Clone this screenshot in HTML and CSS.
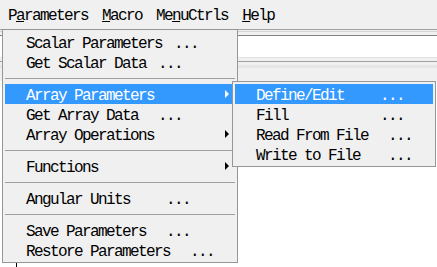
FILE: index.html
```html
<!DOCTYPE html>
<html lang="en">
<head>
  <meta charset="UTF-8">
  <title>Parameters menu</title>
  <link rel="stylesheet" href="styles.css">
</head>
<body>
  <!-- Menu bar -->
  <div class="menubar">
    <span class="mb-item">P<u>a</u>rameters</span>
    <span class="mb-item"><u>M</u>acro</span>
    <span class="mb-item">Me<u>n</u>uCtrls</span>
    <span class="mb-item"><u>H</u>elp</span>
  </div>

  <!-- Window content behind the menus -->
  <div class="toolbar">
    <div class="tb-line"></div>
    <div class="field"></div>
    <div class="tb-rule"></div>
  </div>
  <div class="workspace">
    <div class="tick"></div>
  </div>

  <!-- Parameters drop-down -->
  <div class="menu main">
    <div class="item"><span class="label">Scalar Parameters <span class="dots">...</span></span></div>
    <div class="item"><span class="label">Get Scalar Data <span class="dots">...</span></span></div>
    <div class="sep"></div>
    <div class="item active"><span class="label">Array Parameters</span><span class="arrow"></span></div>
    <div class="item"><span class="label">Get Array Data  <span class="dots">...</span></span></div>
    <div class="item"><span class="label">Array Operations</span><span class="arrow"></span></div>
    <div class="sep"></div>
    <div class="item"><span class="label">Functions</span><span class="arrow"></span></div>
    <div class="sep"></div>
    <div class="item"><span class="label">Angular Units    <span class="dots">...</span></span></div>
    <div class="sep"></div>
    <div class="item"><span class="label">Save Parameters  <span class="dots">...</span></span></div>
    <div class="item"><span class="label">Restore Parameters  <span class="dots">...</span></span></div>
  </div>

  <!-- Array Parameters submenu -->
  <div class="menu submenu">
    <div class="item active"><span class="label">Define/Edit    <span class="dots">...</span></span></div>
    <div class="item"><span class="label">Fill           <span class="dots">...</span></span></div>
    <div class="item"><span class="label">Read From File  <span class="dots">...</span></span></div>
    <div class="item"><span class="label">Write to File   <span class="dots">...</span></span></div>
  </div>
</body>
</html>
```

FILE: styles.css
```css
/* Classic Windows style menus */
html, body {
  margin: 0;
  width: 437px;
  height: 267px;
  overflow: hidden;
  background: #fff;
}

body {
  font-family: "Liberation Mono", "DejaVu Sans Mono", monospace;
  font-size: 16px;
  letter-spacing: -1.6px; /* 8px per character */
  color: #000;
}

u {
  text-decoration: underline;
  text-underline-offset: 1px;
}

.menubar {
  height: 29px;
  display: flex;
  padding-left: 1px;
  background: #f0f0f0;
  box-sizing: border-box;
}

.mb-item {
  padding: 4px 7px 0;
  line-height: 25px;
  white-space: pre;
}

/* Background window */
.toolbar {
  height: 52px;
  background: #f0f0f0;
  border-top: 1px solid #a0a0a0;
  padding-top: 1px;
  box-sizing: border-box;
}

.tb-line {
  border-top: 1px solid #d4d4d4;
  margin-bottom: 3px;
}

.field {
  height: 21px;
  background: #fff;
  border-top: 1px solid #808080;
  border-bottom: 1px solid #e3e3e3;
  margin-bottom: 3px;
}

.tb-rule {
  height: 3px;
  border-top: 1px solid #a0a0a0;
  border-bottom: 1px solid #e6e6e6;
  box-shadow: 0 2px 0 #e6e6e6;
}

.workspace {
  height: 186px;
  padding-top: 182px;
  box-sizing: border-box;
  background: #fff;
}

.tick {
  margin-left: 16px;
  width: 0;
  height: 4px;
  border-left: 1px solid #000;
}

/* Drop-down menus */
.menu {
  position: absolute;
  padding: 2px;
  background: #f0f0f0;
  border: 1px solid #979797;
}

.main {
  left: 2px;
  top: 29px;
  width: 230px;
}

.submenu {
  left: 232px;
  top: 81px;
  width: 198px;
}

.item {
  height: 20px;
  display: flex;
  align-items: center;
  padding: 0 6px 0 21px;
}

.item.active {
  background: #3399ff;
  color: #fff;
}

.label {
  white-space: pre;
  line-height: 16px;
  padding-top: 4px;
}

.dots {
  margin-left: 4px;
}

.arrow {
  margin-left: auto;
  width: 0;
  height: 0;
  border-left: 4px solid #000;
  border-top: 4px solid transparent;
  border-bottom: 4px solid transparent;
}

.item.active .arrow {
  border-left-color: #fff;
}

.sep {
  height: 6px;
  margin-bottom: 5px;
  border-bottom: 1px solid #a0a0a0;
}
```
